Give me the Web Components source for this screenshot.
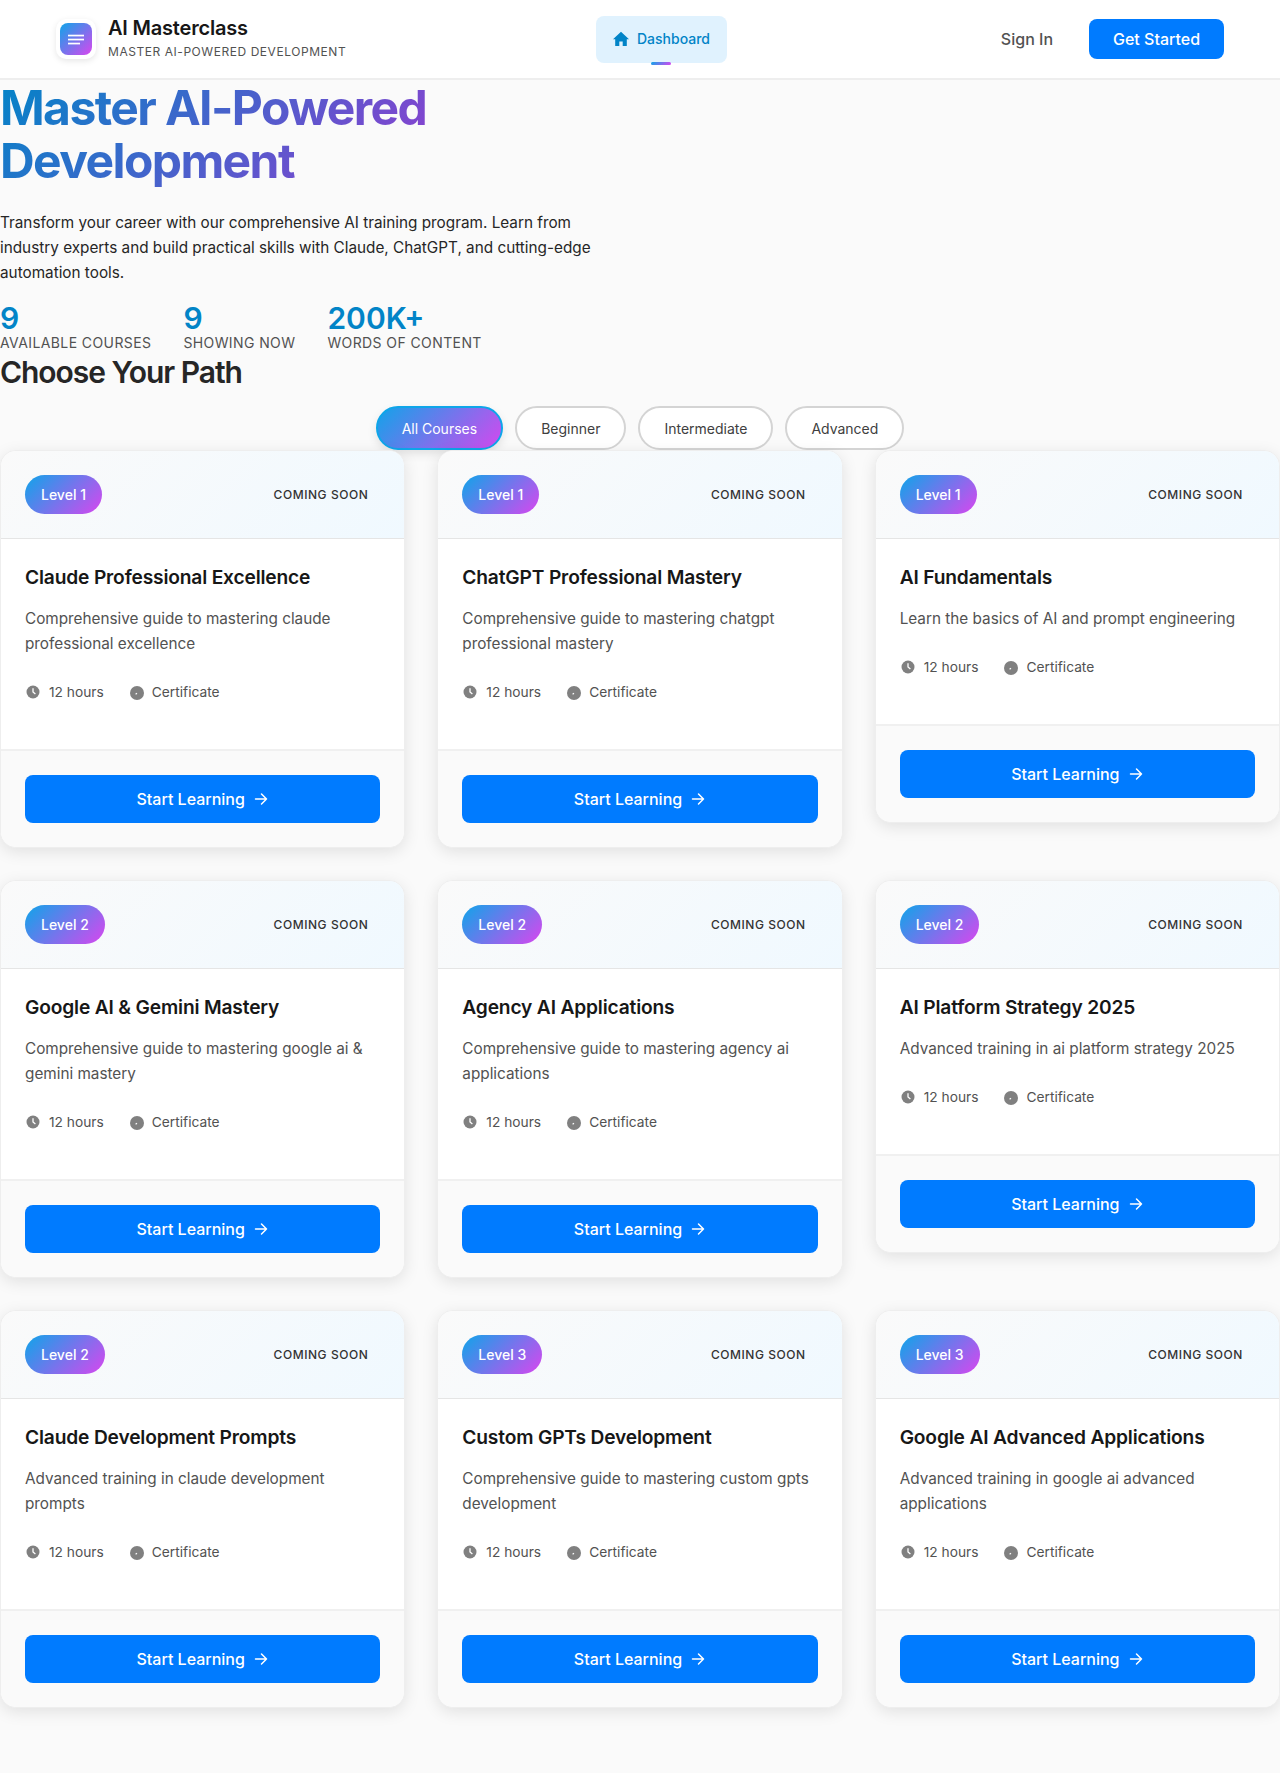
<!DOCTYPE html>
<html lang="en">
<head>
<meta charset="utf-8">
<title>AI Masterclass</title>
<style>
  html, body { margin: 0; padding: 0; }
  body { background: #fafafa; font-family: Inter, "Liberation Sans", sans-serif; color: #212121; }
</style>
</head>
<body>
<app-header></app-header>
<hero-section></hero-section>
<course-catalog></course-catalog>

<script>
const GRAD = 'linear-gradient(135deg, #0ea5e9, #d946ef)';

class AppHeader extends HTMLElement {
  constructor() {
    super();
    this.attachShadow({ mode: 'open' }).innerHTML = `
      <style>
        :host { display: block; background: #fff; border-bottom: 2px solid #eeeeee; }
        .bar { height: 78px; display: flex; align-items: center; padding: 0 56px; }
        .brand { width: 540px; display: flex; align-items: center; gap: 12px; }
        .logo { width: 40px; height: 40px; background: #fff; border-radius: 10px; box-shadow: 0 2px 6px rgba(0,0,0,.1); display: flex; align-items: center; justify-content: center; }
        .logo span { width: 32px; height: 32px; border-radius: 8px; background: ${GRAD}; display: flex; align-items: center; justify-content: center; }
        .text { padding-bottom: 2px; }
        .title { font-size: 20px; line-height: 24px; font-weight: 600; color: #171717; letter-spacing: -.2px; }
        .sub { font-size: 12px; line-height: 16px; margin-top: 4px; color: #525252; letter-spacing: .55px; text-transform: uppercase; }
        .nav { position: relative; width: 131px; height: 47px; box-sizing: border-box; margin-top: 1px; padding-bottom: 2px; border-radius: 8px; background: #e0f2fe; color: #0284c7; font-size: 14px; font-weight: 500; display: flex; align-items: center; justify-content: center; gap: 8px; }
        .nav::after { content: ''; position: absolute; left: 55px; bottom: -2px; width: 20px; height: 3px; border-radius: 2px; background: ${GRAD}; }
        .actions { margin-left: auto; display: flex; align-items: center; gap: 36px; }
        .signin { font-size: 16px; font-weight: 500; color: #525252; }
        .cta { width: 135px; height: 40px; border-radius: 8px; background: #007bff; color: #fff; font-size: 16px; font-weight: 500; display: flex; align-items: center; justify-content: center; }
      </style>
      <div class="bar">
        <div class="brand">
          <div class="logo"><span><svg width="18" height="18" viewBox="0 0 18 18" fill="#fff"><rect x="1" y="4.7" width="16" height="1.7"/><rect x="1" y="8.7" width="16" height="1.7"/><rect x="1" y="12.7" width="12" height="1.7"/></svg></span></div>
          <div class="text"><div class="title">AI Masterclass</div><div class="sub">Master AI-Powered Development</div></div>
        </div>
        <div class="nav"><svg width="16" height="16" viewBox="0 0 16 16" fill="#0284c7"><path d="M8 .8 16 8.2h-2.2V15H9.7v-4.6H6.3V15H2.2V8.2H0z"/></svg>Dashboard</div>
        <div class="actions"><div class="signin">Sign In</div><div class="cta">Get Started</div></div>
      </div>`;
  }
}

class StatItem extends HTMLElement {
  constructor() {
    super();
    this.attachShadow({ mode: 'open' }).innerHTML = `
      <style>
        :host { display: block; }
        .num { font-size: 30px; line-height: 32px; font-weight: 600; color: #0284c7; }
        .label { font-size: 14px; line-height: 18px; color: #525252; letter-spacing: .4px; text-transform: uppercase; }
      </style>
      <div class="num"><slot name="num"></slot></div>
      <div class="label"><slot name="label"></slot></div>`;
  }
}

class HeroSection extends HTMLElement {
  constructor() {
    super();
    this.attachShadow({ mode: 'open' }).innerHTML = `
      <style>
        :host { display: block; }
        h1 { margin: 0; padding-top: 1px; max-width: 600px; font-size: 48px; line-height: 53px; font-weight: 700; letter-spacing: -1.6px; background: linear-gradient(135deg, #0284c7, #c026d3); -webkit-background-clip: text; background-clip: text; color: transparent; }
        p { margin: 23px 0 0; max-width: 600px; font-size: 15.3px; line-height: 25px; color: #262626; }
        .stats { display: flex; gap: 32px; margin-top: 17px; }
      </style>
      <h1>Master AI-Powered Development</h1>
      <p>Transform your career with our comprehensive AI training program. Learn from industry experts and build practical skills with Claude, ChatGPT, and cutting-edge automation tools.</p>
      <div class="stats">
        <stat-item><span slot="num">9</span><span slot="label">Available Courses</span></stat-item>
        <stat-item><span slot="num">9</span><span slot="label">Showing Now</span></stat-item>
        <stat-item><span slot="num">200K+</span><span slot="label">Words of Content</span></stat-item>
      </div>`;
  }
}

class FilterPill extends HTMLElement {
  constructor() {
    super();
    this.attachShadow({ mode: 'open' }).innerHTML = `
      <style>
        :host { display: block; }
        .pill { height: 44px; box-sizing: border-box; padding: 0 24px; display: flex; align-items: center; border: 2px solid #d4d4d4; border-radius: 22px; background: #fff; color: #404040; font-size: 14px; font-weight: 400; }
        :host([active]) .pill { border-color: #0ea5e9; background: ${GRAD}; background-origin: border-box; color: #fff; box-shadow: 0 4px 10px rgba(0,0,0,.1); }
      </style>
      <div class="pill"><slot></slot></div>`;
  }
}

class CourseCard extends HTMLElement {
  constructor() {
    super();
    const arrow = '<svg width="16" height="16" viewBox="0 0 16 16" fill="none" stroke="#fff" stroke-width="1.5" stroke-linecap="round" stroke-linejoin="round"><path d="M2.5 8h11M8.5 3l5 5-5 5"/></svg>';
    this.attachShadow({ mode: 'open' }).innerHTML = `
      <style>
        :host { display: block; background: #fff; border: 1px solid #eeeeee; border-radius: 16px; box-shadow: 0 4px 16px rgba(0,0,0,.1); overflow: hidden; }
        .head { height: 88px; box-sizing: border-box; padding: 0 24px; display: flex; justify-content: space-between; align-items: center; background: linear-gradient(135deg, #fafafa, #f0f9ff); border-bottom: 1px solid #e5e5e5; }
        .level { height: 39px; padding: 0 16px; display: flex; align-items: center; border-radius: 20px; background: ${GRAD}; color: #fff; font-size: 14px; font-weight: 500; }
        .soon { padding-right: 12px; font-size: 12px; font-weight: 450; letter-spacing: .55px; color: #333; text-transform: uppercase; }
        .body { padding: 24px; }
        h3 { margin: 0; font-size: 19.2px; line-height: 28px; font-weight: 600; letter-spacing: -.17px; color: #171717; }
        p { margin: 15px 0 0; font-size: 15.3px; line-height: 25px; color: #525252; }
        .meta { display: flex; gap: 24px; margin: 25.5px 0 23.5px; font-size: 13.75px; line-height: 20px; color: #525252; }
        .meta div { display: flex; align-items: center; gap: 8px; }
        .foot { border-top: 2px solid #f0f0f0; background: #fafafa; padding: 24px; }
        .btn { height: 48px; border-radius: 8px; background: #007bff; color: #fff; font-size: 16px; font-weight: 500; display: flex; align-items: center; justify-content: center; gap: 8px; }
      </style>
      <div class="head"><div class="level"><slot name="level"></slot></div><div class="soon">Coming Soon</div></div>
      <div class="body">
        <h3><slot name="title"></slot></h3>
        <p><slot name="desc"></slot></p>
        <div class="meta">
          <div><svg width="16" height="16" viewBox="0 0 16 16"><circle cx="8" cy="8" r="6.5" fill="#808080"/><path d="M8 4.2V8l2.4 2" fill="none" stroke="#fff" stroke-width="1.3"/></svg>12 hours</div>
          <div><svg width="16" height="16" viewBox="0 0 16 16"><circle cx="9" cy="9" r="7" fill="#808080"/><path d="M7.6 10.3 9 9.3" fill="none" stroke="#fff" stroke-width="1.2"/></svg>Certificate</div>
        </div>
      </div>
      <div class="foot"><div class="btn">Start Learning ${arrow}</div></div>`;
  }
}

const COURSES = [
  ['Level 1', 'Claude Professional Excellence', 'Comprehensive guide to mastering claude professional excellence'],
  ['Level 1', 'ChatGPT Professional Mastery', 'Comprehensive guide to mastering chatgpt professional mastery'],
  ['Level 1', 'AI Fundamentals', 'Learn the basics of AI and prompt engineering'],
  ['Level 2', 'Google AI &amp; Gemini Mastery', 'Comprehensive guide to mastering google ai &amp; gemini mastery'],
  ['Level 2', 'Agency AI Applications', 'Comprehensive guide to mastering agency ai applications'],
  ['Level 2', 'AI Platform Strategy 2025', 'Advanced training in ai platform strategy 2025'],
  ['Level 2', 'Claude Development Prompts', 'Advanced training in claude development prompts'],
  ['Level 3', 'Custom GPTs Development', 'Comprehensive guide to mastering custom gpts development'],
  ['Level 3', 'Google AI Advanced Applications', 'Advanced training in google ai advanced applications'],
];

class CourseCatalog extends HTMLElement {
  constructor() {
    super();
    const cards = COURSES.map(c => `<course-card><span slot="level">${c[0]}</span><span slot="title">${c[1]}</span><span slot="desc">${c[2]}</span></course-card>`).join('');
    this.attachShadow({ mode: 'open' }).innerHTML = `
      <style>
        :host { display: block; padding-bottom: 65px; }
        h2 { margin: 2px 0 0; font-size: 30px; line-height: 36px; font-weight: 600; letter-spacing: -1.05px; color: #262626; }
        .filters { display: flex; justify-content: center; gap: 12px; margin-top: 16px; }
        .grid { display: grid; grid-template-columns: repeat(3, 1fr); gap: 32px; align-items: start; }
      </style>
      <h2>Choose Your Path</h2>
      <div class="filters">
        <filter-pill active>All Courses</filter-pill>
        <filter-pill>Beginner</filter-pill>
        <filter-pill>Intermediate</filter-pill>
        <filter-pill>Advanced</filter-pill>
      </div>
      <div class="grid">${cards}</div>`;
  }
}

customElements.define('app-header', AppHeader);
customElements.define('stat-item', StatItem);
customElements.define('hero-section', HeroSection);
customElements.define('filter-pill', FilterPill);
customElements.define('course-card', CourseCard);
customElements.define('course-catalog', CourseCatalog);
</script>
</body>
</html>
